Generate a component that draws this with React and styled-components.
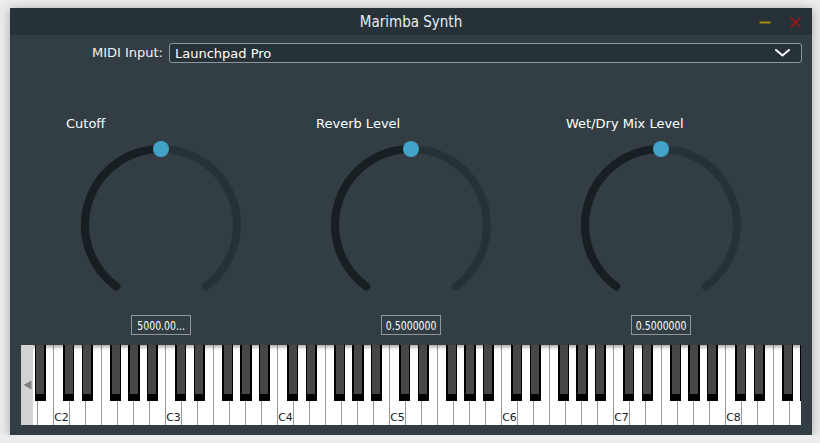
import React from 'react'
import styled, { createGlobalStyle } from 'styled-components'

const sans = '"DejaVu Sans", "Liberation Sans", sans-serif'

const GlobalStyle = createGlobalStyle`
    html, body {
        margin: 0;
        background: #ececec;
    }
    body {
        font-family: ${sans};
        overflow: hidden;
    }
`

const Page = styled.div`
    padding: 8px 0 0 10px;
`

const Window = styled.div`
    position: relative;
    width: 802px;
    height: 427px;
    display: flex;
    flex-direction: column;
    background: #323e44;
    box-shadow: 0 1px 10px rgba(0, 0, 0, 0.3);
    &::after {
        content: '';
        position: absolute;
        left: 742px;
        top: 430px;
        width: 10px;
        height: 10px;
        background: #4d4d4d;
        transform: rotate(45deg);
    }
`

const TitleBar = styled.div`
    height: 27px;
    flex: 0 0 27px;
    background: #263238;
    display: grid;
    grid-template-columns: 1fr auto 1fr;
    align-items: center;
`

const Title = styled.div`
    color: #e9ecee;
    font-size: 15px;
    font-stretch: condensed;
    line-height: 27px;
    padding-top: 1px;
`

const TitleButtons = styled.div`
    display: flex;
    justify-content: flex-end;
    align-items: center;
    gap: 19px;
    padding-right: 11px;
    svg {
        display: block;
    }
`

const Body = styled.div`
    flex: 1;
    display: flex;
    flex-direction: column;
    padding-top: 8px;
`

const MidiRow = styled.div`
    display: grid;
    grid-template-columns: 153px 1fr;
    gap: 6px;
    margin-right: 10px;
    height: 20px;
`

const MidiLabel = styled.div`
    color: #f2f2f2;
    font-size: 13px;
    line-height: 20px;
    text-align: right;
`

const Combo = styled.div`
    box-sizing: border-box;
    height: 20px;
    background: #263238;
    border: 1px solid #8e989b;
    border-radius: 3px;
    display: flex;
    align-items: center;
    justify-content: space-between;
    padding: 0 11px 0 5px;
    color: #ffffff;
    font-size: 13px;
`

const KnobRow = styled.div`
    margin-top: 53px;
    padding-left: 26px;
    display: grid;
    grid-template-columns: repeat(3, 250px);
`

const KnobColumn = styled.div`
    display: flex;
    flex-direction: column;
    align-items: center;
`

const KnobLabel = styled.div`
    align-self: flex-start;
    margin-left: 30px;
    color: #ffffff;
    font-size: 13px;
    line-height: 16px;
    height: 16px;
`

const Dial = styled.svg`
    display: block;
    margin-top: 5px;
`

const ValueBox = styled.div`
    box-sizing: border-box;
    margin-top: 18px;
    width: 60px;
    height: 20px;
    border: 1px solid #8e989b;
    display: flex;
    align-items: center;
    justify-content: center;
    overflow: hidden;
    span {
        color: #ffffff;
        font-size: 13px;
        white-space: nowrap;
        transform: scaleX(0.72);
    }
`

const Keyboard = styled.div`
    display: flex;
    height: 80px;
    margin: 10px 11px 0 11px;
`

const ScrollButton = styled.div`
    flex: 0 0 12px;
    background: #d3d3d3;
    display: flex;
    align-items: center;
    justify-content: center;
    svg {
        display: block;
    }
`

const KeysViewport = styled.div`
    flex: 1;
    position: relative;
    overflow: hidden;
    isolation: isolate;
    background: #ffffff;
    &::before {
        content: '';
        position: absolute;
        left: 0;
        right: 0;
        top: 0;
        height: 5px;
        background: linear-gradient(rgba(0, 0, 0, 0.3), rgba(0, 0, 0, 0));
        z-index: 1;
        pointer-events: none;
    }
`

const WhiteRow = styled.div`
    display: flex;
    height: 100%;
    margin-left: -12px;
`

const WhiteKey = styled.div`
    position: relative;
    flex: 0 0 16px;
    box-sizing: border-box;
    border-left: 1px solid #999999;
    background: #ffffff;
    display: flex;
    align-items: flex-end;
    justify-content: center;
    padding-bottom: 2px;
    color: #1a1a1a;
    font-size: 11px;
    line-height: 11px;
`

const BlackKey = styled.div`
    position: absolute;
    top: 0;
    width: 11.2px;
    height: 56px;
    background: #000000;
    z-index: 2;
    &::after {
        content: '';
        position: absolute;
        left: 1.4px;
        right: 1.4px;
        top: 0;
        height: 49px;
        background: #474747;
    }
`

// offset of the sharp inside its white key, from JUCE note positions
const sharpOffset = { C: 9.28, D: 11.52, F: 8.16, G: 10.4, A: 12.64 }
const letters = ['C', 'D', 'E', 'F', 'G', 'A', 'B']

const whiteKeys = () => {
    let keys = [{ letter: 'A', octave: 1 }, { letter: 'B', octave: 1 }]
    for (let octave = 2; octave <= 8; octave++) {
        letters.forEach((letter) => {
            if (octave === 8 && letters.indexOf(letter) > 4) return
            keys.push({ letter, octave })
        })
    }
    return keys
}

const knobs = [
    { label: 'Cutoff', value: '5000.00...' },
    { label: 'Reverb Level', value: '0.5000000' },
    { label: 'Wet/Dry Mix Level', value: '0.5000000' },
]

const Knob = ({ label, value }) => (
    <KnobColumn>
        <KnobLabel>{label}</KnobLabel>
        <Dial width="176" height="160" viewBox="0 0 176 160">
            <path d="M 43.33 149.49 A 76 76 0 1 1 132.67 149.49" fill="none" stroke="#263238" strokeWidth="8" strokeLinecap="round" />
            <path d="M 43.33 149.49 A 76 76 0 0 1 88 12" fill="none" stroke="#181f22" strokeWidth="8" strokeLinecap="round" />
            <circle cx="88" cy="12" r="8" fill="#42a2c8" />
        </Dial>
        <ValueBox><span>{value}</span></ValueBox>
    </KnobColumn>
)

export default function App() {
    return (
        <Page>
            <GlobalStyle />
            <Window>
                <TitleBar>
                    <span />
                    <Title>Marimba Synth</Title>
                    <TitleButtons>
                        <svg width="12" height="12" viewBox="0 0 12 12">
                            <line x1="0.5" y1="6.5" x2="11.5" y2="6.5" stroke="#aa8811" strokeWidth="2" />
                        </svg>
                        <svg width="11" height="11" viewBox="0 0 11 11">
                            <path d="M 0.5 0.5 L 10.5 10.5 M 10.5 0.5 L 0.5 10.5" stroke="#aa1111" strokeWidth="1.5" fill="none" />
                        </svg>
                    </TitleButtons>
                </TitleBar>
                <Body>
                    <MidiRow>
                        <MidiLabel>MIDI Input:</MidiLabel>
                        <Combo>
                            <span>Launchpad Pro</span>
                            <svg width="15" height="8" viewBox="0 0 15 8">
                                <path d="M 1 1 L 7.5 6.5 L 14 1" fill="none" stroke="#ffffff" strokeWidth="2" strokeLinecap="round" strokeLinejoin="round" />
                            </svg>
                        </Combo>
                    </MidiRow>
                    <KnobRow>
                        {knobs.map((k) => <Knob key={k.label} {...k} />)}
                    </KnobRow>
                    <Keyboard>
                        <ScrollButton>
                            <svg width="9" height="10" viewBox="0 0 9 10">
                                <path d="M 0.5 5 L 8.5 0.5 L 8.5 9.5 Z" fill="#808080" />
                            </svg>
                        </ScrollButton>
                        <KeysViewport>
                            <WhiteRow>
                                {whiteKeys().map((k) => (
                                    <WhiteKey key={k.letter + k.octave}>
                                        {k.letter === 'C' ? 'C' + k.octave : null}
                                        {sharpOffset[k.letter] !== undefined && (
                                            <BlackKey style={{ left: sharpOffset[k.letter] }} />
                                        )}
                                    </WhiteKey>
                                ))}
                            </WhiteRow>
                        </KeysViewport>
                    </Keyboard>
                </Body>
            </Window>
        </Page>
    )
}
